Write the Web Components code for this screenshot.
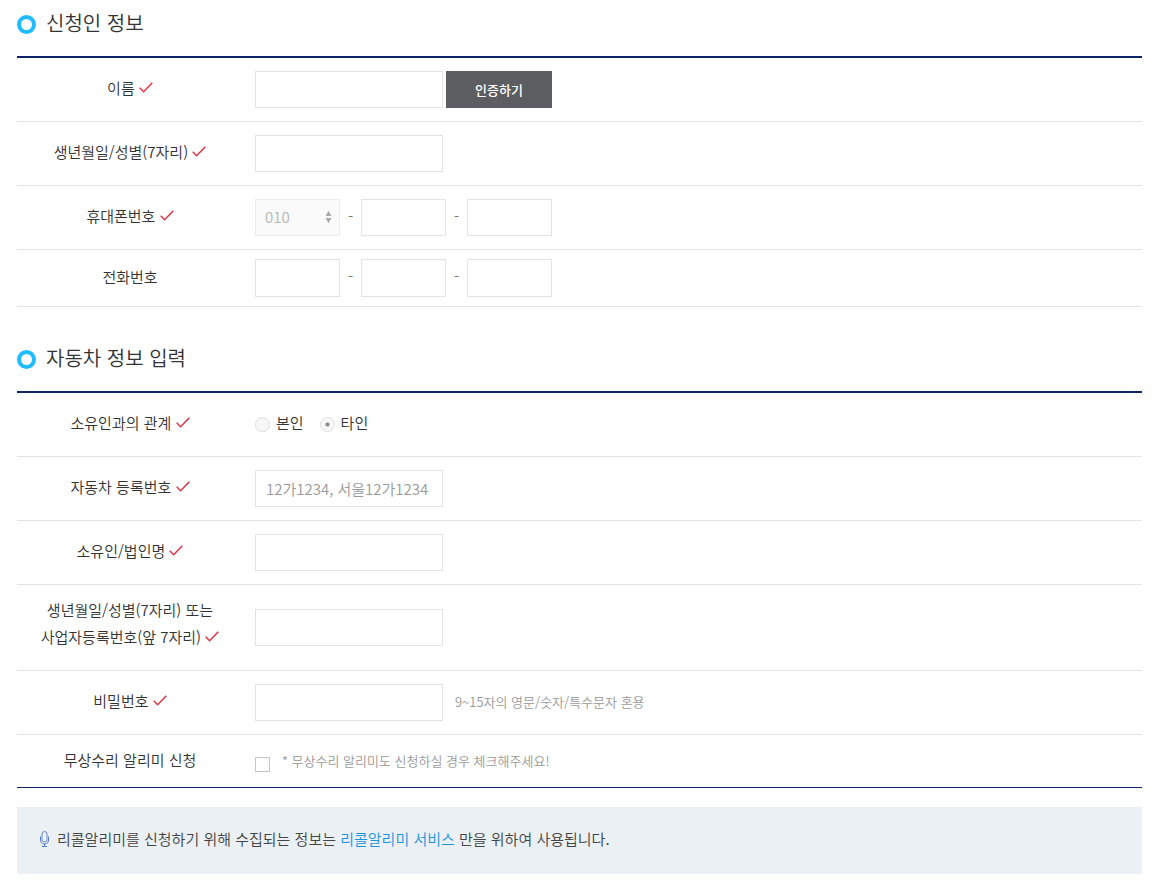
<!DOCTYPE html>
<html lang="ko">
<head>
<meta charset="utf-8">
<meta name="viewport" content="width=device-width, initial-scale=1">
<title>리콜알리미 신청</title>
<style>
	body {
		margin: 0;
		padding: 0 18px 12px 17px;
		background: #fff;
		color: #333;
		font-family: "Noto Sans CJK KR", sans-serif;
		font-size: 15px;
		font-weight: 350;
	}
</style>
</head>
<body>
<recall-form></recall-form>

<script>
const define = (name, html) => {
	const template = document.createElement('template');
	template.innerHTML = html;

	customElements.define(name, class extends HTMLElement {
		constructor() {
			super();
			this.attachShadow({mode: 'open'});
			this.shadowRoot.appendChild(template.content.cloneNode(true));
		}
	});
};

// red tick after the label of a required field
define('required-mark', `
<style>
	:host {
		display: inline-block;
		width: 14px;
		height: 12px;
	}

	svg {
		display: block;
	}
</style>
<svg width="14" height="12" viewBox="0 0 14 12" role="img" aria-label="필수">
	<path d="M0.7 5.8L4.6 9.7L13.3 0.7" fill="none" stroke="#dc3545" stroke-width="1.5"/>
</svg>
`);

define('form-section', `
<style>
	:host {
		display: block;
	}

	header {
		display: flex;
		align-items: center;
		gap: 10px;
		height: 48px;
		padding-bottom: 8px;
		border-bottom: 2px solid #0d246b;
	}

	.ring {
		box-sizing: border-box;
		width: 19px;
		height: 19px;
		border: 4px solid #1fbdff;
		border-radius: 50%;
	}
</style>
<header>
	<span class="ring"></span>
	<slot name="title"></slot>
</header>
<slot></slot>
`);

define('form-row', `
<style>
	:host {
		display: grid;
		grid-template-columns: 226px 1fr;
		align-items: center;
		box-sizing: border-box;
		min-height: 64px;
		border-bottom: 1px solid #e3e3e3;
	}

	:host([compact]) {
		min-height: 57px;
	}

	:host([tall]) {
		min-height: 86px;
	}

	:host([last]) {
		min-height: 53px;
		border-bottom-color: #0d246b;
	}

	.label {
		padding-bottom: 4px;
		line-height: 27px;
		text-align: center;
	}

	:host([tall]) .label {
		padding-bottom: 10px;
	}

	.field {
		display: flex;
		align-items: center;
		padding-left: 12px;
	}
</style>
<div class="label"><slot name="label"></slot></div>
<div class="field"><slot></slot></div>
`);

// wraps a select and draws the up/down arrows over it
define('select-box', `
<style>
	:host {
		display: block;
		position: relative;
	}

	svg {
		position: absolute;
		top: 12px;
		right: 8px;
		pointer-events: none;
	}
</style>
<slot></slot>
<svg width="7" height="12" viewBox="0 0 7 12" aria-hidden="true">
	<path d="M3.5 0L6.5 5H0.5ZM3.5 12L0.5 7H6.5Z" fill="#a8a8a8"/>
</svg>
`);

define('notice-box', `
<style>
	:host {
		display: flex;
		align-items: center;
		gap: 8px;
		box-sizing: border-box;
		min-height: 67px;
		margin-top: 19px;
		padding: 0 23px 4px;
		background: #eaf0f4;
		color: #444;
	}
</style>
<svg width="9" height="16" viewBox="0 0 9 16" fill="none" stroke="#4a6fc0" aria-hidden="true">
	<rect x="2" y="0.5" width="5" height="10.5" rx="2.5" stroke-width="0.8"/>
	<path d="M0.5 5.5V9C0.5 11.5 2 13 4.5 13S8.5 11.5 8.5 9V5.5M4.5 13V15.5M2 15.5H7" stroke-width="0.9"/>
</svg>
<p><slot></slot></p>
`);

define('recall-form', `
<style>
	:host {
		display: block;
	}

	form-section + form-section {
		margin-top: 28px;
	}

	h2 {
		margin: 0;
		padding-bottom: 2px;
		font-size: 20px;
		font-weight: inherit;
		line-height: 30px;
	}

	input, select, button {
		box-sizing: border-box;
		margin: 0;
		border-radius: 0;
		font: inherit;
		color: inherit;
	}

	.text, select {
		width: 188px;
		height: 37px;
		padding: 0 10px;
		border: 1px solid #e3e3e3;
		background: #fff;
	}

	form-row[compact] .text {
		height: 38px;
	}

	.text::placeholder {
		color: #999;
		opacity: 1;
	}

	.part, select {
		width: 85px;
	}

	.dash {
		width: 21px;
		padding-bottom: 5px;
		text-align: center;
		color: #777;
	}

	select {
		appearance: none;
		display: block;
		padding: 0 9px 2px;
		border-color: #ececec;
		background: #fafafa;
		color: #b5b5b5;
		opacity: 1;
	}

	button {
		width: 106px;
		height: 37px;
		margin-left: 3px;
		padding: 0;
		border: 0;
		background: #5c5d61;
		color: #fff;
		font-size: 13px;
		font-weight: 500;
		cursor: pointer;
	}

	[type=radio], [type=checkbox] {
		appearance: none;
		flex: none;
		width: 15px;
		height: 15px;
	}

	[type=radio] {
		border: 1px solid #dedede;
		border-radius: 50%;
		background: #f7f7f7;
	}

	[type=radio]:checked {
		background: radial-gradient(circle, #8a8a8a 1.5px, #f7f7f7 2.5px);
	}

	[type=checkbox] {
		margin-top: 6px;
		border: 1px solid #c4c4c4;
		background: #fff;
	}

	[type=checkbox]:checked {
		background: #1fbdff;
	}

	.choice {
		display: flex;
		align-items: center;
		gap: 6px;
		margin-right: 16px;
	}

	.choice span {
		padding-bottom: 4px;
	}

	.hint {
		margin-left: 12px;
		padding-bottom: 2px;
		color: #999;
		font-size: 13px;
	}

	a {
		color: #1b95e0;
		text-decoration: none;
	}
</style>
<form>
	<form-section>
		<h2 slot="title">신청인 정보</h2>
		<form-row>
			<label slot="label" for="name">이름 <required-mark></required-mark></label>
			<input class="text" id="name" type="text">
			<button type="button">인증하기</button>
		</form-row>
		<form-row>
			<label slot="label" for="birth">생년월일/성별(7자리) <required-mark></required-mark></label>
			<input class="text" id="birth" type="text">
		</form-row>
		<form-row>
			<label slot="label" for="mobile">휴대폰번호 <required-mark></required-mark></label>
			<select-box>
				<select id="mobile" disabled><option>010</option></select>
			</select-box>
			<span class="dash">-</span>
			<input class="text part" type="tel" aria-label="휴대폰번호 가운데 자리">
			<span class="dash">-</span>
			<input class="text part" type="tel" aria-label="휴대폰번호 끝자리">
		</form-row>
		<form-row compact>
			<label slot="label" for="phone">전화번호</label>
			<input class="text part" id="phone" type="tel">
			<span class="dash">-</span>
			<input class="text part" type="tel" aria-label="전화번호 가운데 자리">
			<span class="dash">-</span>
			<input class="text part" type="tel" aria-label="전화번호 끝자리">
		</form-row>
	</form-section>

	<form-section>
		<h2 slot="title">자동차 정보 입력</h2>
		<form-row>
			<span slot="label">소유인과의 관계 <required-mark></required-mark></span>
			<label class="choice"><input type="radio" name="relation" disabled><span>본인</span></label>
			<label class="choice"><input type="radio" name="relation" disabled checked><span>타인</span></label>
		</form-row>
		<form-row>
			<label slot="label" for="plate">자동차 등록번호 <required-mark></required-mark></label>
			<input class="text" id="plate" type="text" placeholder="12가1234, 서울12가1234">
		</form-row>
		<form-row>
			<label slot="label" for="owner">소유인/법인명 <required-mark></required-mark></label>
			<input class="text" id="owner" type="text">
		</form-row>
		<form-row tall>
			<label slot="label" for="owner-no">생년월일/성별(7자리) 또는<br>사업자등록번호(앞 7자리) <required-mark></required-mark></label>
			<input class="text" id="owner-no" type="text">
		</form-row>
		<form-row>
			<label slot="label" for="password">비밀번호 <required-mark></required-mark></label>
			<input class="text" id="password" type="password">
			<span class="hint">9~15자의 영문/숫자/특수문자 혼용</span>
		</form-row>
		<form-row last>
			<label slot="label" for="alert">무상수리 알리미 신청</label>
			<input id="alert" type="checkbox">
			<label class="hint" for="alert">* 무상수리 알리미도 신청하실 경우 체크해주세요!</label>
		</form-row>
	</form-section>

	<notice-box>리콜알리미를 신청하기 위해 수집되는 정보는 <a href="#">리콜알리미 서비스</a> 만을 위하여 사용됩니다.</notice-box>
</form>
`);
</script>
</body>
</html>
